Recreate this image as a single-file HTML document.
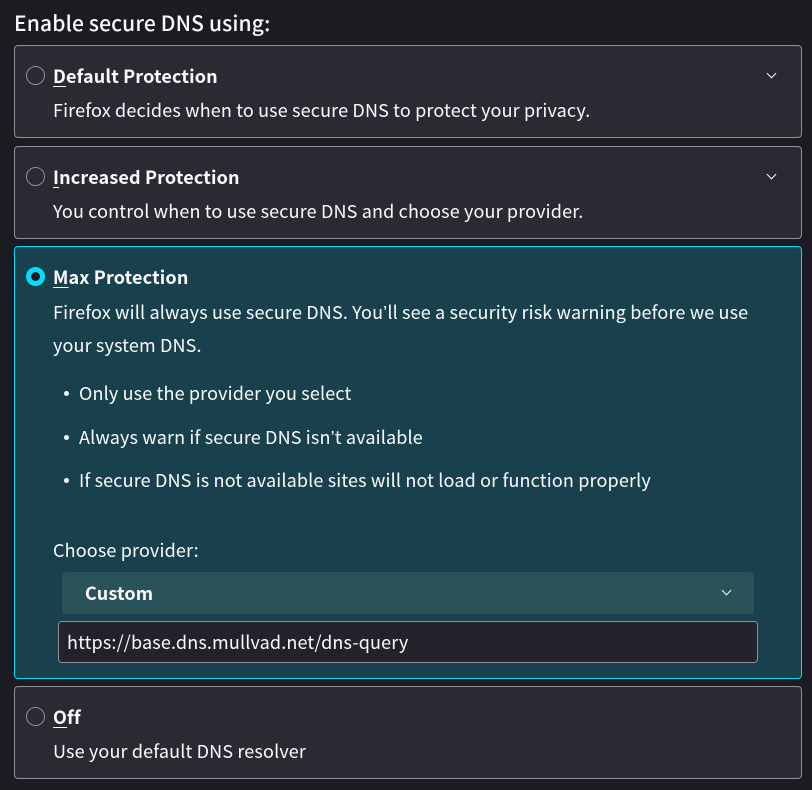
<!DOCTYPE html>
<html><head><style>
body{margin:0;width:812px;height:790px;background:#1c1b22;color:#fbfbfe;font-family:"Noto Sans CJK SC","Liberation Sans",sans-serif;font-size:18px;letter-spacing:0.15px;position:relative;overflow:hidden}
.a{position:absolute;white-space:nowrap;line-height:24px}
.q{font-family:"Liberation Sans",sans-serif}
.card{position:absolute;left:14px;width:788px;background:#2b2a33;border:1px solid #8f8f9d;border-radius:4px;box-sizing:border-box}
.sel{background:#18414d;border:1px solid #00ddff}
.r{position:absolute;left:26px;width:19px;height:19px;border:1.5px solid #8f8f9d;border-radius:50%;box-sizing:border-box;background:#2b2a33}
.r.on{border:5px solid #00ddff;background:#1c1b22}
b{font-weight:700}
u{text-decoration:underline;text-underline-offset:3px}
.chev{position:absolute;width:6px;height:6px;border-right:1.5px solid #fbfbfe;border-bottom:1.5px solid #fbfbfe;transform:rotate(45deg)}
.dot{position:absolute;left:64px;width:5px;height:5px;border-radius:50%;background:#fbfbfe}
</style></head><body>
<div class="a" style="left:14px;top:11px;font-size:21px;font-weight:500">Enable secure DNS using:</div>

<div class="card" style="top:45px;height:93px"></div>
<div class="r" style="top:66px"></div>
<div class="a" style="left:53px;top:64px"><b><u>D</u>efault Protection</b></div>
<div class="chev" style="left:768px;top:70px"></div>
<div class="a" style="left:53px;top:98px">Firefox decides when to use secure DNS to protect your privacy.</div>

<div class="card" style="top:146px;height:93px"></div>
<div class="r" style="top:167px"></div>
<div class="a" style="left:53px;top:165px"><b><u>I</u>ncreased Protection</b></div>
<div class="chev" style="left:768px;top:171px"></div>
<div class="a" style="left:53px;top:199px">You control when to use secure DNS and choose your provider.</div>

<div class="card sel" style="top:246px;height:433px"></div>
<div class="r on" style="top:267px"></div>
<div class="a" style="left:53px;top:265px"><b><u>M</u>ax Protection</b></div>
<div class="a" style="left:53px;top:300px">Firefox will always use secure DNS. You<span class="q">’</span>ll see a security risk warning before we use</div>
<div class="a" style="left:53px;top:333px">your system DNS.</div>
<div class="dot" style="top:391px"></div><div class="a" style="left:79px;top:381px">Only use the provider you select</div>
<div class="dot" style="top:435px"></div><div class="a" style="left:79px;top:425px">Always warn if secure DNS isn<span class="q">’</span>t available</div>
<div class="dot" style="top:478px"></div><div class="a" style="left:79px;top:468px">If secure DNS is not available sites will not load or function properly</div>
<div class="a" style="left:53px;top:538px">Choose provider:</div>
<div style="position:absolute;left:62px;top:572px;width:692px;height:42px;background:#29525b;border-radius:4px"></div>
<div class="a" style="left:85px;top:581px;font-weight:700">Custom</div>
<div class="chev" style="left:723px;top:587px"></div>
<div style="position:absolute;left:58px;top:621px;width:700px;height:42px;background:#23222b;border:1px solid #8f8f9d;border-radius:4px;box-sizing:border-box"></div>
<div class="a" style="left:67px;top:630px">https://base.dns.mullvad.net/dns-query</div>

<div class="card" style="top:686px;height:93px"></div>
<div class="r" style="top:707px"></div>
<div class="a" style="left:53px;top:705px"><b><u>O</u>ff</b></div>
<div class="a" style="left:53px;top:739px">Use your default DNS resolver</div>
</body></html>
